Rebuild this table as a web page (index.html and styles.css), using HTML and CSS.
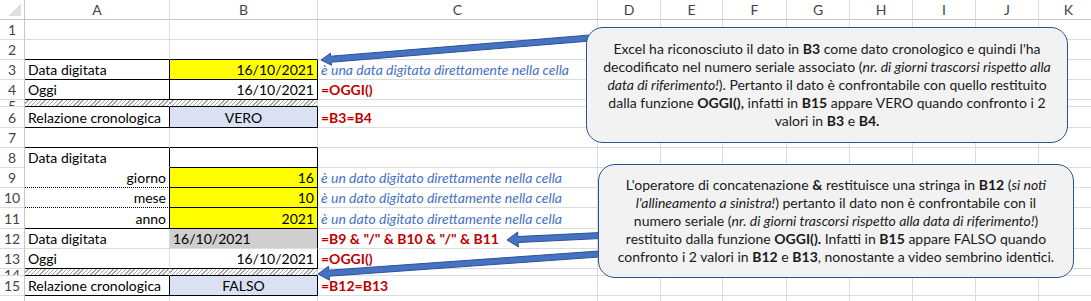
FILE: index.html
```html
<!DOCTYPE html>
<html lang="it">
<head>
<meta charset="utf-8">
<title>Data digitata vs OGGI()</title>
<link rel="stylesheet" href="styles.css">
</head>
<body>
<div class="sheet">
  <div class="grid">
    <!-- header -->
    <div class="corner"></div>
    <div class="ch">A</div><div class="ch">B</div><div class="ch">C</div><div class="ch">D</div><div class="ch">E</div><div class="ch">F</div><div class="ch">G</div><div class="ch">H</div><div class="ch">I</div><div class="ch">J</div><div class="ch">K</div>
    <!-- 1 -->
    <div class="rh">1</div>
    <div class="c"></div><div class="c"></div><div class="c"></div><div class="c"></div><div class="c"></div><div class="c"></div><div class="c"></div><div class="c"></div><div class="c"></div><div class="c"></div><div class="c"></div>
    <!-- 2 -->
    <div class="rh">2</div>
    <div class="c bb"></div><div class="c bb"></div><div class="c"></div><div class="c"></div><div class="c"></div><div class="c"></div><div class="c"></div><div class="c"></div><div class="c"></div><div class="c"></div><div class="c"></div>
    <!-- 3 -->
    <div class="rh">3</div>
    <div class="c bb br">Data digitata</div><div class="c bb br r yel">16/10/2021</div><div class="c note">è una data digitata direttamente nella cella</div><div class="c"></div><div class="c"></div><div class="c"></div><div class="c"></div><div class="c"></div><div class="c"></div><div class="c"></div><div class="c"></div>
    <!-- 4 -->
    <div class="rh">4</div>
    <div class="c bb br">Oggi</div><div class="c bb br r">16/10/2021</div><div class="c fx">=OGGI()</div><div class="c"></div><div class="c"></div><div class="c"></div><div class="c"></div><div class="c"></div><div class="c"></div><div class="c"></div><div class="c"></div>
    <!-- 5 -->
    <div class="rh small">5</div>
    <div class="c bb hatch nor"></div><div class="c bb hatch"></div><div class="c"></div><div class="c"></div><div class="c"></div><div class="c"></div><div class="c"></div><div class="c"></div><div class="c"></div><div class="c"></div><div class="c"></div>
    <!-- 6 -->
    <div class="rh">6</div>
    <div class="c bb br">Relazione cronologica</div><div class="c bb br ctr blu">VERO</div><div class="c fx">=B3=B4</div><div class="c"></div><div class="c"></div><div class="c"></div><div class="c"></div><div class="c"></div><div class="c"></div><div class="c"></div><div class="c"></div>
    <!-- 7 -->
    <div class="rh">7</div>
    <div class="c bb"></div><div class="c bb"></div><div class="c"></div><div class="c"></div><div class="c"></div><div class="c"></div><div class="c"></div><div class="c"></div><div class="c"></div><div class="c"></div><div class="c"></div>
    <!-- 8 -->
    <div class="rh">8</div>
    <div class="c br nob">Data digitata</div><div class="c bb br"></div><div class="c"></div><div class="c"></div><div class="c"></div><div class="c"></div><div class="c"></div><div class="c"></div><div class="c"></div><div class="c"></div><div class="c"></div>
    <!-- 9 -->
    <div class="rh">9</div>
    <div class="c br dot r">giorno</div><div class="c bb br r yel">16</div><div class="c note">è un dato digitato direttamente nella cella</div><div class="c"></div><div class="c"></div><div class="c"></div><div class="c"></div><div class="c"></div><div class="c"></div><div class="c"></div><div class="c"></div>
    <!-- 10 -->
    <div class="rh">10</div>
    <div class="c br dot r">mese</div><div class="c bb br r yel">10</div><div class="c note">è un dato digitato direttamente nella cella</div><div class="c"></div><div class="c"></div><div class="c"></div><div class="c"></div><div class="c"></div><div class="c"></div><div class="c"></div><div class="c"></div>
    <!-- 11 -->
    <div class="rh">11</div>
    <div class="c bb br r">anno</div><div class="c bb br r yel">2021</div><div class="c note">è un dato digitato direttamente nella cella</div><div class="c"></div><div class="c"></div><div class="c"></div><div class="c"></div><div class="c"></div><div class="c"></div><div class="c"></div><div class="c"></div>
    <!-- 12 -->
    <div class="rh">12</div>
    <div class="c">Data digitata</div><div class="c br gry">16/10/2021</div><div class="c fx">=B9 &amp; "/" &amp; B10 &amp; "/" &amp; B11</div><div class="c"></div><div class="c"></div><div class="c"></div><div class="c"></div><div class="c"></div><div class="c"></div><div class="c"></div><div class="c"></div>
    <!-- 13 -->
    <div class="rh">13</div>
    <div class="c bb">Oggi</div><div class="c bb br r">16/10/2021</div><div class="c fx">=OGGI()</div><div class="c"></div><div class="c"></div><div class="c"></div><div class="c"></div><div class="c"></div><div class="c"></div><div class="c"></div><div class="c"></div>
    <!-- 14 -->
    <div class="rh small">14</div>
    <div class="c bb hatch nor"></div><div class="c bb hatch"></div><div class="c"></div><div class="c"></div><div class="c"></div><div class="c"></div><div class="c"></div><div class="c"></div><div class="c"></div><div class="c"></div><div class="c"></div>
    <!-- 15 -->
    <div class="rh">15</div>
    <div class="c bb br">Relazione cronologica</div><div class="c bb br ctr blu">FALSO</div><div class="c fx">=B12=B13</div><div class="c"></div><div class="c"></div><div class="c"></div><div class="c"></div><div class="c"></div><div class="c"></div><div class="c"></div><div class="c"></div>
    <!-- 16 (below the visible edge) -->
    <div class="rh"></div>
    <div class="c"></div><div class="c"></div><div class="c"></div><div class="c"></div><div class="c"></div><div class="c"></div><div class="c"></div><div class="c"></div><div class="c"></div><div class="c"></div><div class="c"></div>
  </div>

  <svg class="arrows" width="1091" height="301" viewBox="0 0 1091 301" aria-hidden="true">
    <polygon points="600,34.2 330.7,56.2 330.5,53.2 321,60 331.5,65.2 331.2,62.2 600.2,40.2"/>
    <polygon points="605,232.3 517.9,236.5 517.6,232 507,240 518.4,247 518.1,242.5 605,238.3"/>
    <polygon points="605,250.6 328.8,270.2 328.5,266.2 318,274 329.5,280.2 329.2,276.2 605,256.6"/>
  </svg>

  <div class="callout callout-1">
    <span>Excel ha riconosciuto il dato in <b>B3</b> come dato cronologico e quindi l'ha</span>
    <span>decodificato nel numero seriale associato (<i>nr. di giorni trascorsi rispetto alla</i></span>
    <span><i>data di riferimento!</i>). Pertanto il dato è confrontabile con quello restituito</span>
    <span>dalla funzione <b>OGGI(),</b> infatti in <b>B15</b> appare VERO quando confronto i 2</span>
    <span>valori in <b>B3</b> e <b>B4.</b></span>
  </div>

  <div class="callout callout-2">
    <span>L'operatore di concatenazione <b>&amp;</b> restituisce una stringa in <b>B12</b> (<i>si noti</i></span>
    <span><i>l'allineamento a sinistra!</i>) pertanto il dato non è confrontabile con il</span>
    <span>numero seriale (<i>nr. di giorni trascorsi rispetto alla data di riferimento!</i>)</span>
    <span>restituito dalla funzione <b>OGGI().</b> Infatti in <b>B15</b> appare FALSO quando</span>
    <span>confronto i 2 valori in <b>B12</b> e <b>B13</b>, nonostante a video sembrino identici.</span>
  </div>
</div>
</body>
</html>
```

FILE: styles.css
```css
* { box-sizing: border-box; }

html, body {
  margin: 0;
  padding: 0;
  background: #ffffff;
}

body {
  width: 1091px;
  height: 301px;
  overflow: hidden;
  font-family: Lato, "Liberation Sans", sans-serif;
  font-size: 14px;
  color: #000;
}

.sheet {
  position: relative;
  width: 1091px;
  height: 301px;
  overflow: hidden;
}

.grid {
  display: grid;
  grid-template-columns: 25px 145px 148px 280px 63px 62px 64px 63px 63px 63px 63px 60px;
  grid-template-rows: 20px 20px 20px 20px 20px 7px 21px 20px 20px 20px 20px 21px 20px 20px 7px 20px 20px;
}

.corner {
  border-right: 1px solid #c6c6c6;
  border-bottom: 1px solid #c6c6c6;
  background: linear-gradient(to bottom right, transparent 50%, #dfdfdf 50%) no-repeat right 3px bottom 3px / 12px 12px;
}

.ch {
  display: flex;
  align-items: center;
  justify-content: center;
  border-right: 1px solid #dadcdd;
  border-bottom: 1px solid #c6c6c6;
  color: #444;
  font-size: 14px;
}

.rh {
  display: flex;
  align-items: center;
  justify-content: center;
  border-right: 1px solid #c6c6c6;
  border-bottom: 1px solid #dadcdd;
  color: #444;
  font-size: 14px;
  overflow: hidden;
}

/* collapsed rows: only the top of the row number shows */
.rh.small {
  align-items: flex-start;
  line-height: 12px;
}

.c {
  display: flex;
  align-items: flex-end;
  padding: 0 3px 0 3px;
  border-right: 1px solid #dadcdd;
  border-bottom: 1px solid #dadcdd;
  white-space: nowrap;
  line-height: 18px;
  min-width: 0;
}

.r { justify-content: flex-end; }
.ctr { justify-content: center; }

.bb { border-bottom-color: #000; }
.br { border-right-color: #000; }
.nob { border-bottom-color: #fff; }
.nor { border-right-color: transparent; }
.dot { border-bottom: 1px dotted #000; }

.yel { background: #ffff00; }
.blu { background: #d9e1f2; }
.gry { background: #d0cece; }

.hatch {
  background: repeating-linear-gradient(135deg, #ffffff 0 2px, #a3a3a3 2px 3px);
}

.note {
  color: #4472c4;
  font-style: italic;
}

.fx {
  color: #c00000;
  font-weight: bold;
}

.arrows {
  position: absolute;
  left: 0;
  top: 0;
  z-index: 1;
  pointer-events: none;
}

.arrows polygon {
  fill: #4472c4;
  stroke: #2f528f;
  stroke-width: 1;
  stroke-linejoin: miter;
}

.callout {
  position: absolute;
  z-index: 2;
  display: flex;
  flex-direction: column;
  justify-content: center;
  align-items: center;
  background: #f2f2f2;
  border: 1.5px solid #2f528f;
  border-radius: 17px;
  color: #1a1a1a;
  font-size: 14px;
  line-height: 18px;
  text-align: center;
  white-space: nowrap;
}

.callout span { display: block; }

.callout-1 {
  left: 586px;
  top: 27px;
  width: 482px;
  height: 116px;
}

.callout-2 {
  left: 598px;
  top: 164px;
  width: 476px;
  height: 114px;
}
```
